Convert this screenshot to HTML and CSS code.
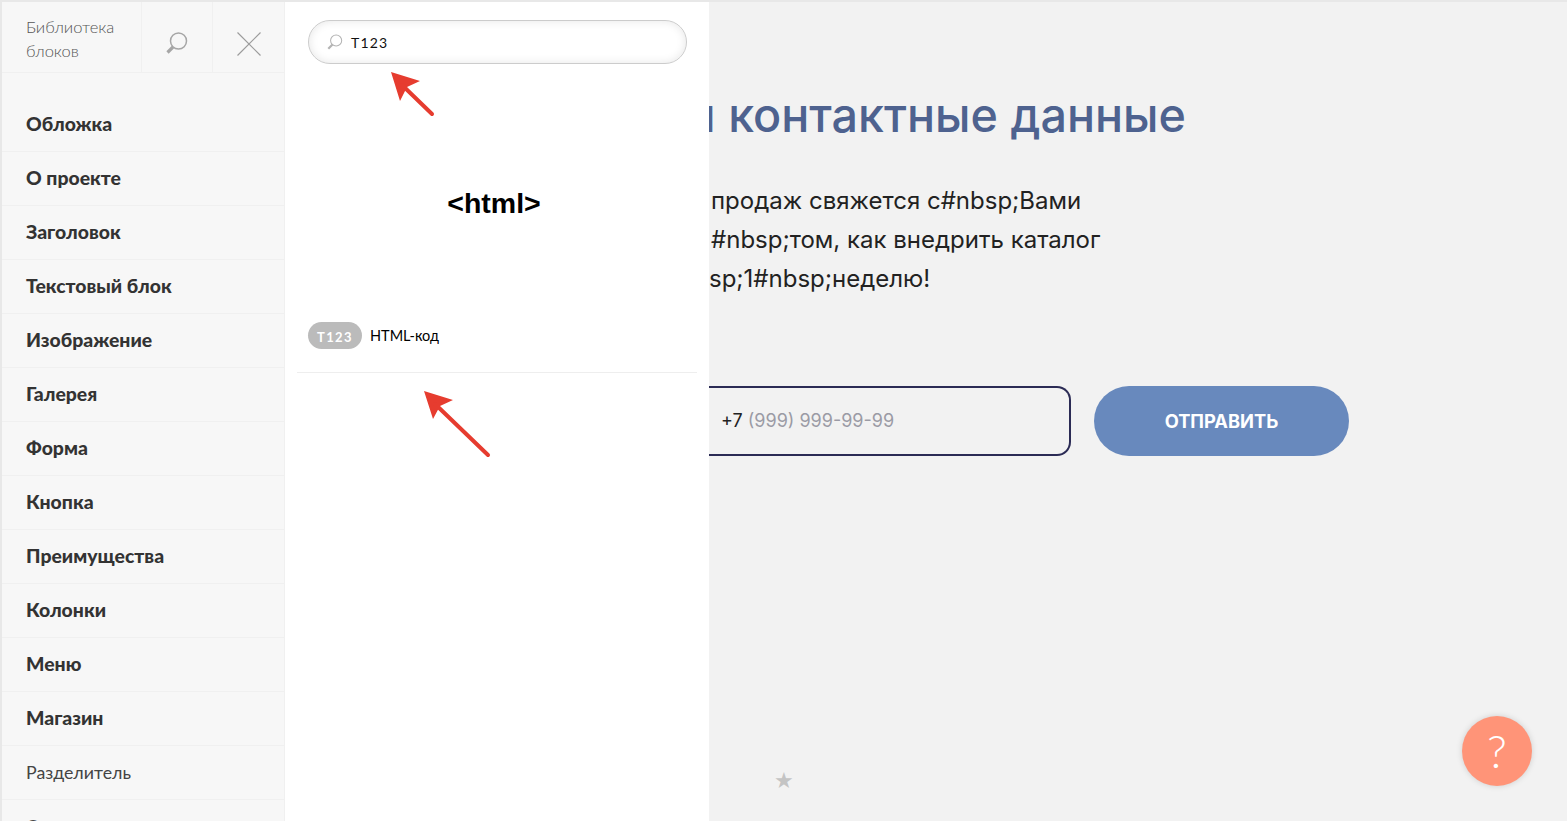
FILE: index.html
```html
<!DOCTYPE html>
<html lang="ru">
<head>
    <meta charset="UTF-8">
    <title>Библиотека блоков</title>
    <link rel="stylesheet" href="styles.css">
</head>
<body>
    <aside class="sidebar">
        <div class="sidebar-head">
            <div class="sidebar-title">Библиотека<br>блоков</div>
            <div class="head-btn btn-search">
                <svg width="26" height="26" viewBox="0 0 26 26" fill="none">
                    <circle cx="15.5" cy="10" r="8" stroke="#a6a6a6" stroke-width="1.5"/>
                    <path d="M10 16 L4.5 21.5" stroke="#a6a6a6" stroke-width="3.2"/>
                </svg>
            </div>
            <div class="head-btn btn-close">
                <svg width="26" height="26" viewBox="0 0 26 26" fill="none">
                    <path d="M1.5 1.5 L24.5 24.5 M24.5 1.5 L1.5 24.5" stroke="#9c9c9c" stroke-width="1.2"/>
                </svg>
            </div>
        </div>
        <ul class="menu">
            <li class="first">Обложка</li>
            <li>О проекте</li>
            <li>Заголовок</li>
            <li>Текстовый блок</li>
            <li>Изображение</li>
            <li>Галерея</li>
            <li>Форма</li>
            <li>Кнопка</li>
            <li>Преимущества</li>
            <li>Колонки</li>
            <li>Меню</li>
            <li>Магазин</li>
            <li class="light">Разделитель</li>
            <li class="light">Отзывы</li>
        </ul>
    </aside>

    <section class="results">
        <div class="search">
            <svg width="17" height="17" viewBox="0 0 26 26" fill="none">
                <circle cx="15.5" cy="10" r="8.5" stroke="#b4b4b4" stroke-width="1.6"/>
                <path d="M10 16 L3.5 22.5" stroke="#b4b4b4" stroke-width="3.4"/>
            </svg>
            <span class="search-text">T123</span>
        </div>
        <div class="preview">&lt;html&gt;</div>
        <div class="block-row">
            <span class="badge">T123</span>
            <span class="block-name">HTML-код</span>
        </div>
        <svg class="arrow arrow-top" width="60" height="60" viewBox="0 0 60 60">
            <path d="M15 13 L44 22 L31 28 L24 42 Z" fill="#e63c2f"/>
            <path d="M26 26 L56 55" stroke="#e63c2f" stroke-width="4" stroke-linecap="round"/>
        </svg>
        <svg class="arrow arrow-bottom" width="80" height="80" viewBox="0 0 80 80">
            <path d="M9 6 L38 15 L25 21 L18 34 Z" fill="#e63c2f"/>
            <path d="M20 19 L73 70" stroke="#e63c2f" stroke-width="4" stroke-linecap="round"/>
        </svg>
    </section>

    <main class="page">
        <h1 class="form-title">и контактные данные</h1>
        <p class="form-text">
            <span>продаж свяжется с#nbsp;Вами</span>
            <span>#nbsp;том, как внедрить каталог</span>
            <span class="tail">sp;1#nbsp;неделю!</span>
        </p>
        <form class="form-row">
            <div class="phone"><span class="code">+7</span> (999) 999-99-99</div>
            <div class="submit">ОТПРАВИТЬ</div>
        </form>
        <div class="star">★</div>
        <div class="help">?</div>
    </main>
</body>
</html>
```

FILE: styles.css
```css
* {
    box-sizing: border-box;
}
html, body {
    height: 100%;
}
body {
    margin: 0;
    display: flex;
    overflow: hidden;
    border-top: 2px solid #e8e8e8;
    background-color: #f2f2f2;
    font-family: "Lato", sans-serif;
}

/* left column */
.sidebar {
    width: 285px;
    flex-shrink: 0;
    overflow: hidden;
    background-color: #f7f7f7;
    border-left: 2px solid #e8e8e8;
    border-right: 1px solid #f0f0f0;
}
.sidebar-head {
    display: flex;
    height: 71px;
    border-bottom: 1px solid #f0f0f0;
}
.sidebar-title {
    width: 139px;
    padding: 13px 0 0 24px;
    font-size: 16.5px;
    font-weight: 300;
    line-height: 24px;
    color: #555;
}
.head-btn {
    width: 71px;
    padding-top: 13px;
    display: flex;
    align-items: center;
    justify-content: center;
    border-left: 1px solid #f0f0f0;
}
.btn-search {
    padding-right: 3px;
}
.btn-close {
    padding-left: 2px;
}
.menu {
    list-style: none;
    margin: 0;
    padding: 0;
}
.menu li {
    height: 54px;
    padding-left: 24px;
    line-height: 52px;
    font-size: 19.4px;
    font-weight: 900;
    color: #333;
    border-bottom: 1px solid #f0f0f0;
}
.menu li.first {
    height: 79px;
    padding-top: 25px;
}
.menu li.light {
    font-size: 17.8px;
    font-weight: 400;
    color: #444;
}

/* search results */
.results {
    position: relative;
    width: 424px;
    flex-shrink: 0;
    padding: 18px 12px 0;
    background-color: #fff;
}
.search {
    display: flex;
    align-items: center;
    gap: 8px;
    height: 44px;
    margin: 0 10px 0 11px;
    padding-left: 17px;
    border: 1px solid #ccc;
    border-radius: 22px;
    box-shadow: inset 0 0 10px rgba(0, 0, 0, 0.1);
}
.search-text {
    font-size: 14px;
    letter-spacing: 1.2px;
    color: #111;
}
.preview {
    margin-top: 124px;
    padding-right: 6px;
    text-align: center;
    font-family: "Liberation Sans", sans-serif;
    font-size: 28.5px;
    font-weight: 700;
    line-height: 30px;
    color: #000;
}
.block-row {
    display: flex;
    align-items: center;
    gap: 8px;
    height: 51px;
    margin-top: 104px;
    padding: 0 0 23px 11px;
    border-bottom: 1px solid #eee;
}
.badge {
    width: 54px;
    height: 27px;
    border-radius: 14px;
    background-color: #bbb;
    color: #fff;
    text-align: center;
    font-size: 13px;
    font-weight: 700;
    line-height: 30px;
    letter-spacing: 1.4px;
}
.block-name {
    font-size: 14.5px;
    line-height: 29px;
    color: #000;
}
.arrow {
    position: absolute;
}
.arrow-top {
    left: 91px;
    top: 57px;
}
.arrow-bottom {
    left: 130px;
    top: 383px;
}

/* page behind the panels */
.page {
    position: relative;
    flex: 1;
    min-width: 0;
    overflow: hidden;
}
.form-title {
    margin: 84px 0 0 -21.4px;
    font-family: "Inter", sans-serif;
    font-size: 46.7px;
    font-weight: 500;
    line-height: 58px;
    white-space: nowrap;
    color: #4e628f;
}
.form-text {
    margin: 37px 0 0;
    font-family: "Inter", sans-serif;
    font-size: 24px;
    line-height: 39px;
    color: #222;
}
.form-text span {
    display: block;
    padding-left: 2px;
}
.form-text .tail {
    padding-left: 0;
}
.form-row {
    display: flex;
    gap: 23px;
    margin: 88px 0 0;
    font-family: "Inter", sans-serif;
}
.phone {
    width: 362px;
    height: 70px;
    padding-left: 12px;
    border: 2px solid #2b2b55;
    border-left: 0;
    border-radius: 0 14px 14px 0;
    font-size: 18px;
    line-height: 66px;
    color: #9b9ba5;
}
.phone .code {
    color: #222;
}
.submit {
    width: 255px;
    height: 70px;
    border-radius: 35px;
    background-color: #6889bd;
    color: #fff;
    text-align: center;
    font-size: 18.3px;
    font-weight: 700;
    line-height: 70px;
}
.star {
    position: absolute;
    left: 65px;
    top: 764px;
    font-family: "DejaVu Sans", sans-serif;
    font-size: 22px;
    line-height: 30px;
    color: #c4c4c4;
}
.help {
    position: absolute;
    right: 35px;
    bottom: 35px;
    width: 70px;
    height: 70px;
    border-radius: 50%;
    background-color: #ff9478;
    box-shadow: 0 0 6px rgba(0, 0, 0, 0.15);
    color: #fff;
    text-align: center;
    font-size: 46px;
    font-weight: 300;
    line-height: 70px;
}
```
